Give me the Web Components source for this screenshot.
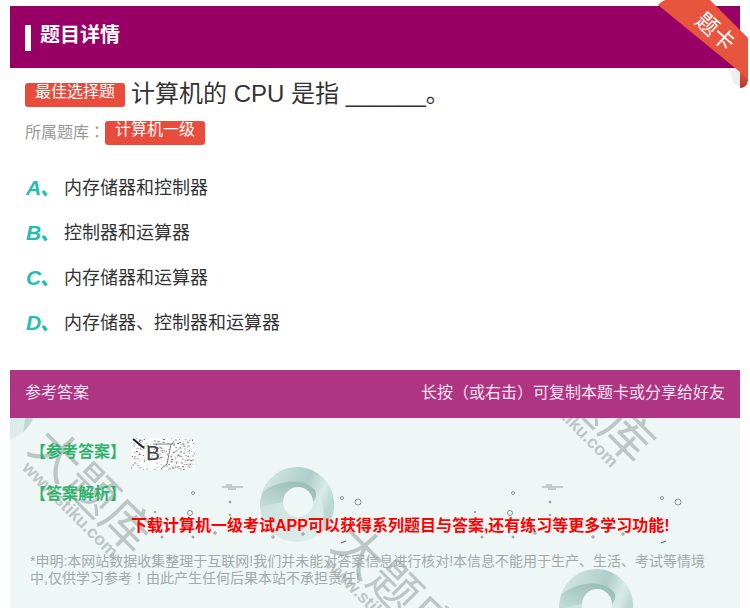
<!DOCTYPE html>
<html lang="zh">
<head>
<meta charset="utf-8">
<title>题目详情</title>
<style>
    html, body {
        margin: 0;
        height: 608px;
        overflow: hidden;
        background: #fff;
        font-family: "Liberation Sans", "Noto Sans CJK SC", sans-serif;
    }

    body {
        padding: 6px 10px 0;
        box-sizing: border-box;
    }
</style>
</head>
<body>
<question-card>
    <card-header>题目详情</card-header>
    <question-stem kind="最佳选择题" bank="计算机一级">计算机的 CPU 是指 ______。</question-stem>
    <option-list>
        <option-row letter="A">内存储器和控制器</option-row>
        <option-row letter="B">控制器和运算器</option-row>
        <option-row letter="C">内存储器和运算器</option-row>
        <option-row letter="D">内存储器、控制器和运算器</option-row>
    </option-list>
    <answer-panel></answer-panel>
</question-card>

<script>
class QuestionCard extends HTMLElement {
    constructor() {
        super();
        this.attachShadow({ mode: "open" });
    }

    connectedCallback() {
        this.shadowRoot.innerHTML = `
            <style>
                :host {
                    display: block;
                    position: relative;
                }

                .ribbon {
                    position: absolute;
                    right: -8px;
                    top: -6px;
                    width: 92px;
                    height: 90px;
                }

                .ribbon span {
                    position: absolute;
                    left: 29px;
                    top: 20px;
                    width: 60px;
                    text-align: center;
                    color: #fff;
                    font-size: 22px;
                    line-height: 24px;
                    transform: rotate(42deg);
                }
            </style>
            <slot></slot>
            <div class="ribbon">
                <svg width="92" height="90" viewBox="0 0 92 90">
                    <defs>
                        <linearGradient id="fold" x1="0" y1="0" x2="0" y2="1">
                            <stop offset="0" stop-color="#e8553f"/>
                            <stop offset="1" stop-color="#b8352a"/>
                        </linearGradient>
                        <linearGradient id="shade" x1="0" y1="0" x2="1" y2="0">
                            <stop offset="0" stop-color="#000" stop-opacity="0"/>
                            <stop offset="1" stop-color="#000" stop-opacity="0.07"/>
                        </linearGradient>
                    </defs>
                    <path d="M40 30 L84 68 L84 86 L78 84 L72 68 Z" fill="url(#shade)"/>
                    <path d="M84 70 L92 76 L92 80 Q91 88 84 88 Z" fill="url(#fold)"/>
                    <path d="M9 0 L54 0 L92 38 L92 80 Q88 75 84 72 L2 5 Q4 2 9 0 Z" fill="#e8553f"/>
                </svg>
                <span>题卡</span>
            </div>
        `;
    }
}

class CardHeader extends HTMLElement {
    constructor() {
        super();
        this.attachShadow({ mode: "open" });
    }

    connectedCallback() {
        this.shadowRoot.innerHTML = `
            <style>
                :host {
                    display: flex;
                    align-items: center;
                    gap: 9px;
                    height: 62px;
                    padding-left: 15px;
                    background: #990066;
                    color: #fff;
                    font-size: 20px;
                    font-weight: bold;
                }

                .bar {
                    width: 6px;
                    height: 26px;
                    margin-top: 2px;
                    background: #fff;
                }

                .label {
                    margin-bottom: 8px;
                }
            </style>
            <div class="bar"></div>
            <div class="label"><slot></slot></div>
        `;
    }
}

class QuestionStem extends HTMLElement {
    constructor() {
        super();
        this.attachShadow({ mode: "open" });
    }

    connectedCallback() {
        this.shadowRoot.innerHTML = `
            <style>
                :host {
                    display: block;
                    padding: 10px 15px 0;
                }

                .title {
                    display: flex;
                    align-items: center;
                    gap: 6px;
                    height: 32px;
                    color: #333;
                    font-size: 24px;
                }

                .bank {
                    display: flex;
                    align-items: flex-start;
                    margin-top: 11px;
                    color: #999;
                    font-size: 16px;
                    line-height: 21px;
                }

                .colon {
                    font-family: "Noto Sans CJK TC", sans-serif;
                }

                .tag {
                    box-sizing: border-box;
                    width: 100px;
                    height: 24px;
                    border-radius: 3px;
                    background: #e74c3c;
                    color: #fff;
                    font-size: 16px;
                    line-height: 17px;
                    text-align: center;
                }

                .title .tag {
                    margin-top: 1px;
                }

                .text {
                    line-height: 32px;
                }
            </style>
            <div class="title">
                <span class="tag">${this.getAttribute("kind")}</span>
                <span class="text"><slot></slot></span>
            </div>
            <div class="bank">
                <span>所属题库<span class="colon" lang="zh-Hant">：</span></span>
                <span class="tag">${this.getAttribute("bank")}</span>
            </div>
        `;
    }
}

class OptionList extends HTMLElement {
    constructor() {
        super();
        this.attachShadow({ mode: "open" });
    }

    connectedCallback() {
        this.shadowRoot.innerHTML = `
            <style>
                :host {
                    display: flex;
                    flex-direction: column;
                    padding: 18px 15px 0;
                }
            </style>
            <slot></slot>
        `;
    }
}

class OptionRow extends HTMLElement {
    constructor() {
        super();
        this.attachShadow({ mode: "open" });
    }

    connectedCallback() {
        this.shadowRoot.innerHTML = `
            <style>
                :host {
                    display: flex;
                    align-items: center;
                    height: 45px;
                    color: #333;
                    font-size: 18px;
                }

                .letter {
                    width: 39px;
                    padding-left: 1px;
                    box-sizing: border-box;
                    color: #27bcb0;
                    font-size: 21px;
                    font-weight: bold;
                    font-style: italic;
                    letter-spacing: -1.5px;
                }
            </style>
            <span class="letter">${this.getAttribute("letter")}、</span>
            <span><slot></slot></span>
        `;
    }
}

class SwirlLogo extends HTMLElement {
    constructor() {
        super();
        this.attachShadow({ mode: "open" });
    }

    connectedCallback() {
        const id = this.getAttribute("uid");
        this.shadowRoot.innerHTML = `
            <style>
                :host {
                    position: absolute;
                    display: block;
                    width: 76px;
                    height: 76px;
                }
            </style>
            <svg width="76" height="76" viewBox="-38 -38 76 76">
                <defs>
                    <linearGradient id="a${id}" x1="0" y1="0" x2="1" y2="0.4">
                        <stop offset="0" stop-color="#d9ebe8"/>
                        <stop offset="0.62" stop-color="#aecdc8"/>
                        <stop offset="0.85" stop-color="#d8ebe7"/>
                        <stop offset="1" stop-color="#bcd8d2"/>
                    </linearGradient>
                    <linearGradient id="b${id}" x1="0" y1="1" x2="1" y2="0">
                        <stop offset="0" stop-color="#c6dfda"/>
                        <stop offset="1" stop-color="#93b7b1"/>
                    </linearGradient>
                    <linearGradient id="c${id}" x1="0" y1="0" x2="1" y2="1">
                        <stop offset="0" stop-color="#c4ddd8"/>
                        <stop offset="1" stop-color="#e2f1ee"/>
                    </linearGradient>
                </defs>
                <path fill-rule="evenodd" fill="url(#c${id})" d="M-37 0 A37 37 0 1 1 37 0 A37 37 0 1 1 -37 0 Z M-14 -3 A15 15 0 1 0 16 -3 A15 15 0 1 0 -14 -3 Z"/>
                <path d="M-36 -9 A37 37 0 0 1 37 -4 A37 37 0 0 1 24 28 C28 10 27 -5 18 -15 C8 -25 -14 -26 -34 -13 Z" fill="url(#a${id})"/>
                <path d="M-37 3 A37 37 0 0 1 -34 -13 C-18 -26 6 -27 17 -16 C21 -12 19 -6 16 -3 A15 15 0 0 0 -14 -3 C-20 -2 -30 0 -37 3 Z" fill="url(#b${id})"/>
            </svg>
        `;
    }
}

class SiteWatermark extends HTMLElement {
    constructor() {
        super();
        this.attachShadow({ mode: "open" });
    }

    connectedCallback() {
        this.shadowRoot.innerHTML = `
            <style>
                :host {
                    position: absolute;
                    display: block;
                    color: #bcc6c5;
                    transform-origin: 0 0;
                    transform: rotate(45deg);
                    white-space: nowrap;
                }

                .name {
                    font-size: 50px;
                    line-height: 50px;
                }

                .url {
                    margin: -8px 0 0 10px;
                    font-size: 17.5px;
                    line-height: 22px;
                    font-weight: bold;
                }
            </style>
            <div class="name">大题库</div>
            <div class="url">www.stiku.com</div>
        `;
    }
}

class SpeckleLayer extends HTMLElement {
    constructor() {
        super();
        this.attachShadow({ mode: "open" });
    }

    connectedCallback() {
        const dots = [
            [183, 75, 1.5], [220, 84, 1], [145, 94, 0.8], [180, 95, 2.5], [152, 119, 1],
            [183, 119, 1], [205, 115, 1.2], [220, 97, 0.8], [263, 119, 1.2], [293, 116, 1.2],
            [332, 80, 1.5], [348, 84, 3]
        ];
        const marks = dots.map(([x, y, r]) =>
            `<circle cx="${x}" cy="${y}" r="${r}" fill="none" stroke="#777" stroke-width="0.8"/>`
        ).join("");

        this.shadowRoot.innerHTML = `
            <style>
                :host {
                    position: absolute;
                    left: 0;
                    top: 0;
                    display: block;
                }
            </style>
            <svg width="730" height="190" viewBox="0 0 730 190">
                <g id="tile">
                    ${marks}
                    <path d="M212 69 H233 M218 71 H226 M216 67 H222" stroke="#777" stroke-width="0.7" fill="none"/>
                    <path d="M331 125 L336 123" stroke="#666" stroke-width="1.2"/>
                </g>
                <use href="#tile" x="320"/>
            </svg>
        `;
    }
}

class NoiseStamp extends HTMLElement {
    constructor() {
        super();
        this.attachShadow({ mode: "open" });
    }

    connectedCallback() {
        // the answer letter sits on a scanned looking scrap, so scatter dark grains on it
        let seed = 7;
        const next = () => (seed = (seed * 16807) % 2147483647) / 2147483647;
        let grains = "";
        for (let i = 0; i < 220; i++) {
            const x = (next() * 64).toFixed(1);
            const y = (next() * 32).toFixed(1);
            const shade = Math.round(90 + next() * 110);
            grains += `<rect x="${x}" y="${y}" width="${next() > 0.7 ? 2 : 1}" height="1" fill="rgb(${shade},${shade},${shade})"/>`;
        }

        this.shadowRoot.innerHTML = `
            <style>
                :host {
                    position: relative;
                    display: block;
                    width: 64px;
                    height: 32px;
                    background: #fafcfb;
                }

                svg {
                    position: absolute;
                    left: 0;
                    top: 0;
                }

                span {
                    position: absolute;
                    left: 15px;
                    top: 1px;
                    color: #444;
                    font-size: 21px;
                    font-weight: normal;
                    line-height: 28px;
                }
            </style>
            <svg width="64" height="32" viewBox="0 0 64 32">
                ${grains}
                <path d="M22 6 H44 M40 6 L36 26 L30 31" stroke="#666" stroke-width="0.8" fill="none"/>
                <path d="M2 1 L13 10" stroke="#222" stroke-width="2"/>
            </svg>
            <span>B</span>
        `;
    }
}

class AnswerPanel extends HTMLElement {
    constructor() {
        super();
        this.attachShadow({ mode: "open" });
    }

    connectedCallback() {
        this.shadowRoot.innerHTML = `
            <style>
                :host {
                    display: block;
                    margin-top: 27px;
                }

                .top {
                    display: flex;
                    justify-content: space-between;
                    align-items: center;
                    height: 48px;
                    padding: 0 15px;
                    background: #b03484;
                    color: #f4e4ef;
                    font-size: 16px;
                }

                .top > span {
                    margin-bottom: 7px;
                }

                .tc {
                    font-family: "Noto Sans CJK TC", sans-serif;
                }

                .body {
                    position: relative;
                    height: 190px;
                    overflow: hidden;
                    background: #eff7f6;
                }

                .content {
                    position: relative;
                    display: flex;
                    flex-direction: column;
                    padding: 20px 20px 0;
                }

                .line {
                    display: flex;
                    align-items: flex-start;
                    gap: 5px;
                    color: #2fb36a;
                    font-size: 16px;
                    font-weight: bold;
                    line-height: 24px;
                }

                .line > span {
                    margin-top: 2px;
                }

                .analysis {
                    margin-top: 12px;
                }

                .promo {
                    margin: 9px 0 0 101px;
                    color: #f00;
                    font-size: 16px;
                    font-weight: bold;
                    line-height: 22px;
                    white-space: nowrap;
                }

                .note {
                    margin-top: 16px;
                    width: 680px;
                    color: #a3a8a8;
                    font-size: 14px;
                    line-height: 16px;
                }
            </style>
            <div class="top">
                <span>参考答案</span>
                <span>长按<span class="tc" lang="zh-Hant">（</span>或右击<span class="tc" lang="zh-Hant">）</span>可复制本题卡或分享给好友</span>
            </div>
            <div class="body">
                <site-watermark style="left: 46px; top: 2px"></site-watermark>
                <site-watermark style="left: 546px; top: -88px"></site-watermark>
                <site-watermark style="left: 349px; top: 99px"></site-watermark>
                <swirl-logo uid="1" style="left: -49px; top: -52px"></swirl-logo>
                <swirl-logo uid="2" style="left: 249px; top: 49px"></swirl-logo>
                <swirl-logo uid="3" style="left: 548px; top: 151px"></swirl-logo>
                <speckle-layer></speckle-layer>
                <div class="content">
                    <div class="line">
                        <span>【参考答案】</span>
                        <noise-stamp></noise-stamp>
                    </div>
                    <div class="line analysis">【答案解析】</div>
                    <div class="promo">下载计算机一级考试APP可以获得系列题目与答案,还有练习等更多学习功能!</div>
                    <div class="note">*申明:本网站数据收集整理于互联网!我们并未能对答案信息进行核对!本信息不能用于生产、生活、考试等情境中,仅供学习参考<span class="tc" lang="zh-Hant">！</span>由此产生任何后果本站不承担责任!</div>
                </div>
            </div>
        `;
    }
}

customElements.define("question-card", QuestionCard);
customElements.define("card-header", CardHeader);
customElements.define("question-stem", QuestionStem);
customElements.define("option-list", OptionList);
customElements.define("option-row", OptionRow);
customElements.define("swirl-logo", SwirlLogo);
customElements.define("site-watermark", SiteWatermark);
customElements.define("speckle-layer", SpeckleLayer);
customElements.define("noise-stamp", NoiseStamp);
customElements.define("answer-panel", AnswerPanel);
</script>
</body>
</html>
